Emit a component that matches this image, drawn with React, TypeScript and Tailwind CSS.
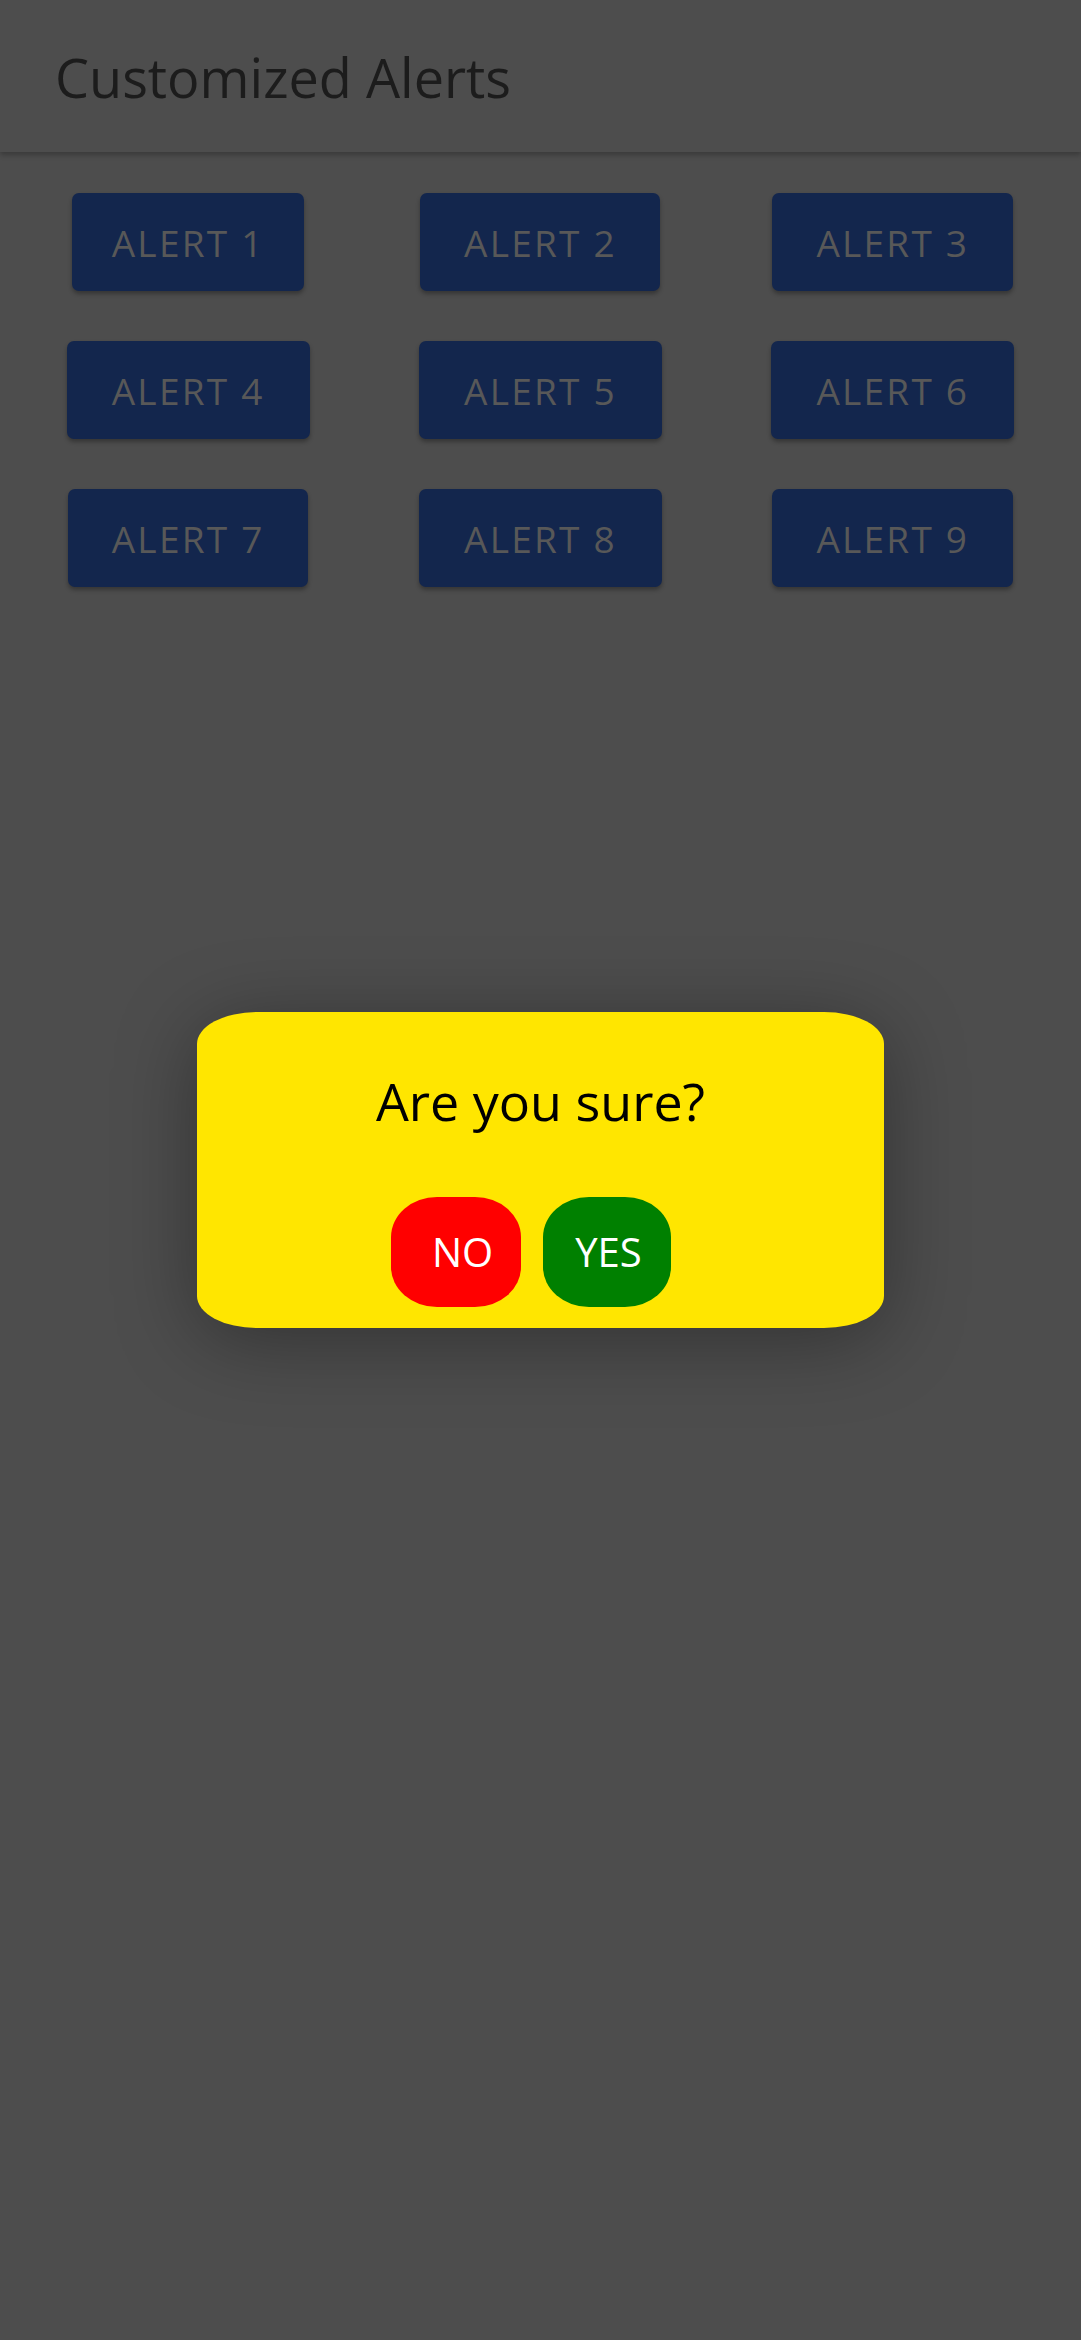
import React from "react";

const font = { fontFamily: '"Open Sans", "Noto Sans", sans-serif' };

const alerts = [
  { n: 1, w: "w-[232px]" },
  { n: 2, w: "w-[240px]" },
  { n: 3, w: "w-[241px]" },
  { n: 4, w: "w-[243px]" },
  { n: 5, w: "w-[243px]" },
  { n: 6, w: "w-[243px]" },
  { n: 7, w: "w-[240px]" },
  { n: 8, w: "w-[243px]" },
  { n: 9, w: "w-[241px]" },
];

export default function App() {
  return (
    <div className="relative w-full min-h-[2340px] bg-[#4d4d4d] overflow-hidden" style={font}>
      <header className="h-[152px] bg-[#4d4d4d] flex items-center pl-[55px] pt-[2px] shadow-[0_3px_5px_rgba(0,0,0,0.25)] relative z-10">
        <h1 className="text-[54px] text-[#1c1c1c] font-normal leading-none">Customized Alerts</h1>
      </header>
      <main className="grid grid-cols-3 px-3 pt-[41px] gap-y-[50px]">
        {alerts.map((a) => (
          <div key={a.n} className="flex justify-center">
            <button className={`${a.w} h-[98px] rounded-[7px] bg-[#13264d] text-[#585858] text-[37px] tracking-[0.06em] leading-none shadow-[0_3px_4px_rgba(0,0,0,0.3)]`}>
              ALERT {a.n}
            </button>
          </div>
        ))}
      </main>
      <div className="absolute inset-0 flex items-center justify-center">
        <div className="w-[687px] h-[316px] bg-[#ffe600] rounded-[60px/32px] shadow-[0_12px_80px_rgba(0,0,0,0.35)] flex flex-col items-center pt-[63px]">
          <p className="text-[52px] leading-none text-black">Are you sure?</p>
          <div className="flex gap-[22px] mt-[70px] mr-[20px]">
            <button className="w-[130px] h-[110px] bg-[#ff0000] rounded-[46px/40px] text-white text-[40px] leading-none pl-[14px]">NO</button>
            <button className="w-[128px] h-[110px] bg-[#008000] rounded-[46px/40px] text-white text-[40px] leading-none pl-[4px]">YES</button>
          </div>
        </div>
      </div>
    </div>
  );
}
